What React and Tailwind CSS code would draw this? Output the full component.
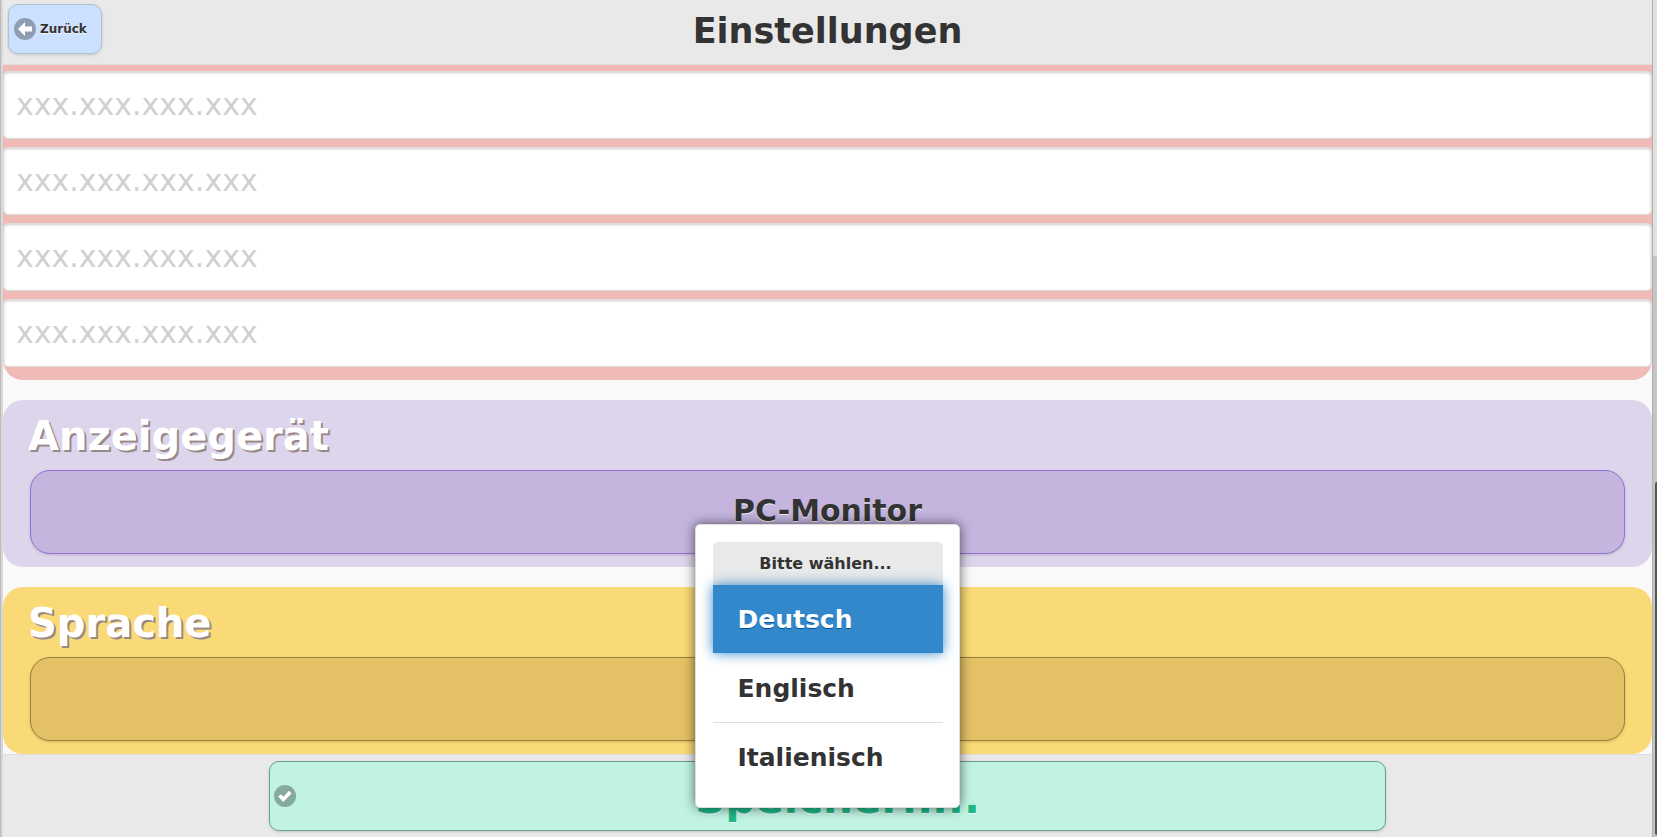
import React, { useState } from "react";

const ipFields = ["ip-1", "ip-2", "ip-3", "ip-4"];
const languages = ["Deutsch", "Englisch", "Italienisch"];

const SettingsCard = ({ title, className, children }) => (
  <section className={`rounded-[20px] px-[27px] pb-[13px] ${className}`}>
    <h2 className="-ml-0.5 pt-3 h-[70px] text-[40px] leading-[48px] font-bold text-white [text-shadow:2px_2px_0_#998888]">
      {title}
    </h2>
    {children}
  </section>
);

const App = () => {
  const [language, setLanguage] = useState("Deutsch");

  return (
    <div
      className="relative flex h-screen overflow-hidden bg-[#f9f9f9] text-[#333]"
      style={{ fontFamily: '"DejaVu Sans", sans-serif' }}
    >
      <div className="w-[3px] shrink-0 border-l border-[#bbb] bg-[#d8d8d8]" />

      <div className="flex min-w-0 flex-1 flex-col">
        <header className="grid h-[65px] shrink-0 grid-cols-[1fr_auto_1fr] items-start border-b border-[#ddd] bg-[#e9e9e9] px-[5px] pt-1">
          <button
            type="button"
            className="flex h-[50px] w-[94px] items-center gap-1 rounded-[10px] border border-[#aac4d0] bg-[#cce0ff] px-[5px] text-xs font-bold shadow-[0_1px_3px_rgba(0,0,0,0.15)] [text-shadow:0_1px_0_#f3f3f3]"
          >
            <svg viewBox="0 0 22 22" className="size-[22px] shrink-0">
              <circle cx="11" cy="11" r="11" fill="#8f9db3" />
              <path d="M4 11l7-7v4.5h7v5h-7V18z" fill="#fff" />
            </svg>
            Zurück
          </button>
          <h1 className="pt-1.5 text-[35px] leading-[42px] font-bold">
            Einstellungen
          </h1>
        </header>

        <main className="min-h-0 flex-1 overflow-hidden">
          <section className="flex flex-col gap-2 rounded-b-[20px] bg-[#f0bbb7] pt-1.5 pb-[13px]">
            {ipFields.map((id) => (
              <input
                key={id}
                id={id}
                type="text"
                aria-label="IP-Adresse"
                placeholder="xxx.xxx.xxx.xxx"
                className="h-[68px] w-full rounded-[5px] border border-[#ddd] bg-white px-3 pb-0.5 text-[30px] shadow-[inset_0_1px_3px_rgba(0,0,0,0.2)] placeholder:text-[#d0d0d0]"
              />
            ))}
          </section>

          <SettingsCard title="Anzeigegerät" className="mt-5 bg-[#ddd5eb]">
            <button
              type="button"
              className="flex h-[84px] w-full items-center justify-center rounded-[20px] border border-[#9370d8] bg-[#c4b4de] pb-0.5 text-3xl font-bold shadow-[0_1px_3px_rgba(0,0,0,0.15)] [text-shadow:0_1px_0_#f3f3f3]"
            >
              PC-Monitor
            </button>
          </SettingsCard>

          <SettingsCard title="Sprache" className="mt-5 bg-[#fad977]">
            <button
              type="button"
              aria-haspopup="true"
              aria-expanded="true"
              aria-label={`Sprache: ${language}`}
              className="block h-[84px] w-full rounded-[20px] border border-[#99803c] bg-[#e3c164] shadow-[0_1px_3px_rgba(0,0,0,0.15)]"
            />
          </SettingsCard>
        </main>

        <footer className="flex h-[83px] shrink-0 justify-center border-t border-[#ddd] bg-[#e9e9e9] pt-1.5">
          <button
            type="button"
            className="flex h-[70px] w-[1117px] max-w-full items-center rounded-[10px] border border-[#66a08d] bg-[#c0f3e2] px-1 text-[42px] font-bold text-[#1fb888] shadow-[0_1px_3px_rgba(0,0,0,0.15)] [text-shadow:0_1px_0_#f3f3f3]"
          >
            <svg viewBox="0 0 22 22" className="size-[22px] shrink-0">
              <circle cx="11" cy="11" r="11" fill="#86aa9e" />
              <path
                d="M4.2 11.6l2.6-2.4 2.7 2.5 5.4-6 2.7 2.7-8.4 8.6z"
                fill="#fff"
              />
            </svg>
            <span className="flex-1 pt-1 pr-0.5 text-center">Speichern...</span>
          </button>
        </footer>
      </div>

      {/* scroll track with its thumb and the outer window's thumb */}
      <div className="flex w-[5px] shrink-0 flex-col border-l border-[#b0b0ac] bg-[#c3c4c3]">
        <div className="h-64 bg-[#e0e0de]" />
        <div className="mt-[226px] mb-0.5 ml-0.5 flex-1 rounded-l-sm bg-[#525755]" />
      </div>

      <div className="absolute top-[524px] left-1/2 -ml-[134px] w-[265px] rounded-[5px] border border-[#ddd] bg-white py-[17px] pr-4 pl-[17px] font-bold shadow-[0_0_12px_rgba(0,0,0,0.6)]">
        <h3 className="h-[43px] rounded-t-[5px] bg-[#e9e9e9] pr-1 text-center text-base leading-[44px]">
          Bitte wählen...
        </h3>
        <ul>
          {languages.map((item) => (
            <li key={item}>
              <button
                type="button"
                onClick={() => setLanguage(item)}
                className={`block w-full px-[25px] pt-0.5 text-left text-[25px] ${
                  item === language
                    ? "relative h-[68px] bg-[#3388cc] text-white shadow-[0_0_12px_#3388cc] [text-shadow:0_1px_0_#005599]"
                    : item === "Italienisch"
                    ? "h-[67px]"
                    : "h-[70px] border-b border-[#ddd]"
                }`}
              >
                {item}
              </button>
            </li>
          ))}
        </ul>
      </div>
    </div>
  );
};

export default App;
